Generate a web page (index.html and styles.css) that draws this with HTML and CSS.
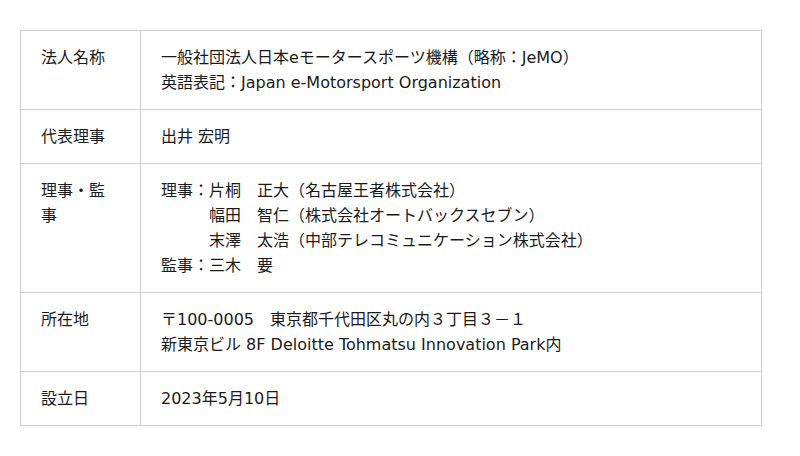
FILE: index.html
```html
<!DOCTYPE html>
<html lang="ja">
<head>
<meta charset="utf-8">
<title>法人概要</title>
<link rel="stylesheet" href="styles.css">
</head>
<body>
<div class="wrap">
<table class="info">
<tr><th>法人名称</th><td>一般社団法人日本eモータースポーツ機構（略称：JeMO）<br>英語表記：Japan e-Motorsport Organization</td></tr>
<tr><th>代表理事</th><td>出井 宏明</td></tr>
<tr><th>理事・監事</th><td>理事：片桐　正大（名古屋王者株式会社）<br>　　　幅田　智仁（株式会社オートバックスセブン）<br>　　　末澤　太浩（中部テレコミュニケーション株式会社）<br>監事：三木　要</td></tr>
<tr><th>所在地</th><td>〒100-0005　東京都千代田区丸の内３丁目３－１<br>新東京ビル 8F Deloitte Tohmatsu Innovation Park内</td></tr>
<tr><th>設立日</th><td>2023年5月10日</td></tr>
</table>
</div>
</body>
</html>
```
FILE: styles.css
```css
html, body { margin: 0; padding: 0; background: #fff; }
body {
  font-family: "DejaVu Sans", "Noto Sans CJK JP", sans-serif;
  font-size: 16px;
  color: #1a1a1a;
}
.wrap { padding: 30px 0 0 20px; }
.info {
  width: 742px;
  border-collapse: collapse;
  border: 1px solid #d0d0d0;
}
.info th, .info td {
  border: 1px solid #d0d0d0;
  padding: 14px 20px;
  line-height: 25px;
  text-align: left;
  vertical-align: top;
  font-weight: normal;
}
.info th { width: 79px; }
```
